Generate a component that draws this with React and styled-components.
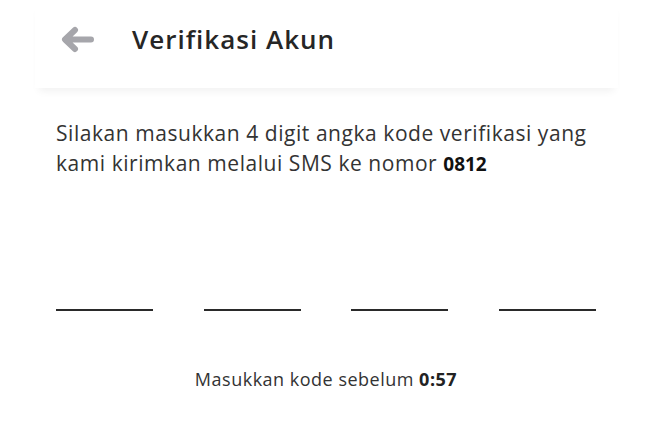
import React from "react";
import styled, { createGlobalStyle } from "styled-components";

const GlobalStyle = createGlobalStyle`
  html, body {
    margin: 0;
    padding: 0;
    background: #ffffff;
  }
  body {
    font-family: "Open Sans", "Lato", sans-serif;
    color: #333333;
  }
`;

function BackArrow() {
  return (
    <svg width="35" height="27" viewBox="0 0 35 27" fill="none">
      <path
        d="M6 13.5 H31 M15 4 L5 13.5 L15 23"
        stroke="#a6a6ab"
        strokeWidth="6"
        strokeLinecap="round"
        strokeLinejoin="round"
      />
    </svg>
  );
}

function App() {
  const digits = [0, 1, 2, 3];

  return (
    <Page>
      <GlobalStyle />
      <Header>
        <BackButton>
          <BackArrow />
        </BackButton>
        <Title>Verifikasi Akun</Title>
      </Header>

      <Content>
        <Message>
          Silakan masukkan 4 digit angka kode verifikasi yang kami kirimkan
          melalui SMS ke nomor <Phone>0812</Phone>
        </Message>

        <CodeRow>
          {digits.map((d) => (
            <CodeSlot key={d} />
          ))}
        </CodeRow>

        <Timer>
          Masukkan kode sebelum <strong>0:57</strong>
        </Timer>
      </Content>
    </Page>
  );
}

export default App;

const Page = styled.div`
  width: 671px;
  height: 441px;
  background: #ffffff;
  overflow: hidden;
`;

const Header = styled.div`
  display: flex;
  align-items: center;
  height: 88px;
  width: 583px;
  margin-left: 35px;
  padding-left: 25px;
  box-sizing: border-box;
  background: #ffffff;
  box-shadow: 0 7px 8px -4px rgba(0, 0, 0, 0.06);
`;

const BackButton = styled.div`
  display: flex;
  align-items: center;
  width: 72px;
  margin-top: -10px;
  cursor: pointer;
`;

const Title = styled.h1`
  margin: -10px 0 0;
  font-size: 26px;
  font-weight: 600;
  letter-spacing: 1px;
  color: #262626;
`;

const Content = styled.div`
  display: flex;
  flex-direction: column;
  width: 540px;
  margin-left: 56px;
  padding-top: 30px;
`;

const Message = styled.p`
  margin: 0;
  font-size: 21px;
  line-height: 30px;
  letter-spacing: 0.55px;
  color: #333333;
`;

const Phone = styled.strong`
  font-weight: 700;
  font-size: 19px;
  letter-spacing: 0;
  color: #111111;
`;

const CodeRow = styled.div`
  display: flex;
  justify-content: space-between;
  margin-top: 130px;
`;

const CodeSlot = styled.div`
  width: 97px;
  height: 2px;
  background: #2a2a2a;
`;

const Timer = styled.div`
  margin-top: 56px;
  text-align: center;
  font-size: 18px;
  letter-spacing: 0.5px;
  color: #333333;

  strong {
    font-weight: 700;
    color: #222222;
  }
`;
